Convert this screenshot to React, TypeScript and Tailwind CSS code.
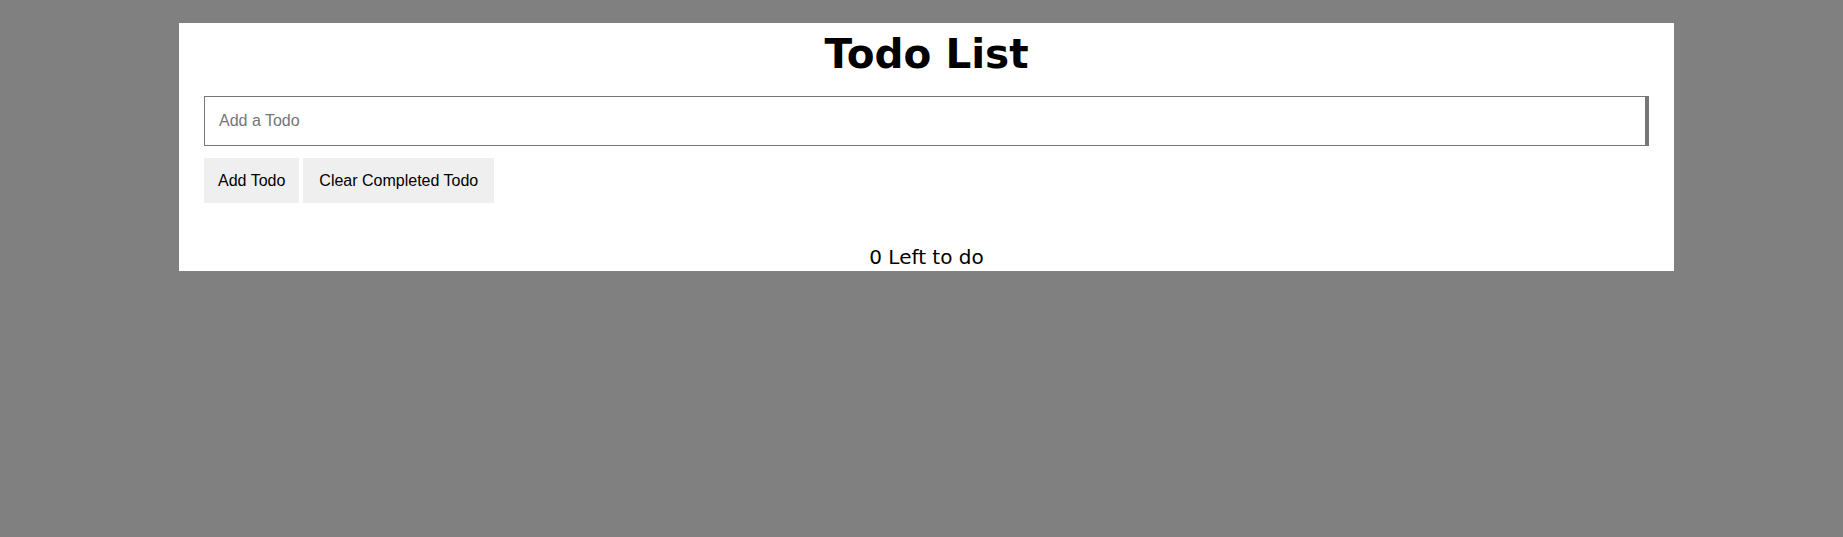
import React, { useState } from 'react';

interface Todo {
    id: number;
    text: string;
    done: boolean;
}

const App: React.FC = () => {
    const [todos, setTodos] = useState<Todo[]>([]);
    const [text, setText] = useState('');

    const addTodo = () => {
        if (!text.trim()) return;
        setTodos([...todos, { id: Date.now(), text, done: false }]);
        setText('');
    };

    const clearCompleted = () => setTodos(todos.filter(t => !t.done));

    const left = todos.filter(t => !t.done).length;

    return (
        <div className="min-h-screen bg-[#808080] pt-[23px]">
            <div className="ml-[179px] w-[1495px] bg-white px-[25px] pb-[2px]">
                <h1 className="pt-[8px] text-center text-[40.5px] leading-[46px] font-bold text-black" style={{ fontFamily: '"DejaVu Sans", Verdana, sans-serif' }}>
                    Todo List
                </h1>
                <input
                    type="text"
                    value={text}
                    onChange={(e) => setText(e.target.value)}
                    placeholder="Add a Todo"
                    className="mt-[19px] block h-[50px] w-[1445px] border border-r-4 border-[#767676] pl-[14px] text-[16px] text-black outline-none placeholder:text-[#757575]"
                    style={{ fontFamily: '"Liberation Sans", Arial, sans-serif' }}
                />
                <div className="mt-[12px] flex gap-[4px]" style={{ fontFamily: '"Liberation Sans", Arial, sans-serif' }}>
                    <button onClick={addTodo} className="h-[45px] bg-[#efefef] px-[14px] text-[16px] text-black">
                        Add Todo
                    </button>
                    <button onClick={clearCompleted} className="h-[45px] bg-[#efefef] px-[16px] text-[16px] text-black">
                        Clear Completed Todo
                    </button>
                </div>
                <ul>
                    {todos.map(todo => (
                        <li key={todo.id}>{todo.text}</li>
                    ))}
                </ul>
                <p className="mt-[42px] text-center text-[20px] leading-[24px] text-black" style={{ fontFamily: '"DejaVu Sans", Verdana, sans-serif' }}>
                    {left} Left to do
                </p>
            </div>
        </div>
    );
};

export default App;
